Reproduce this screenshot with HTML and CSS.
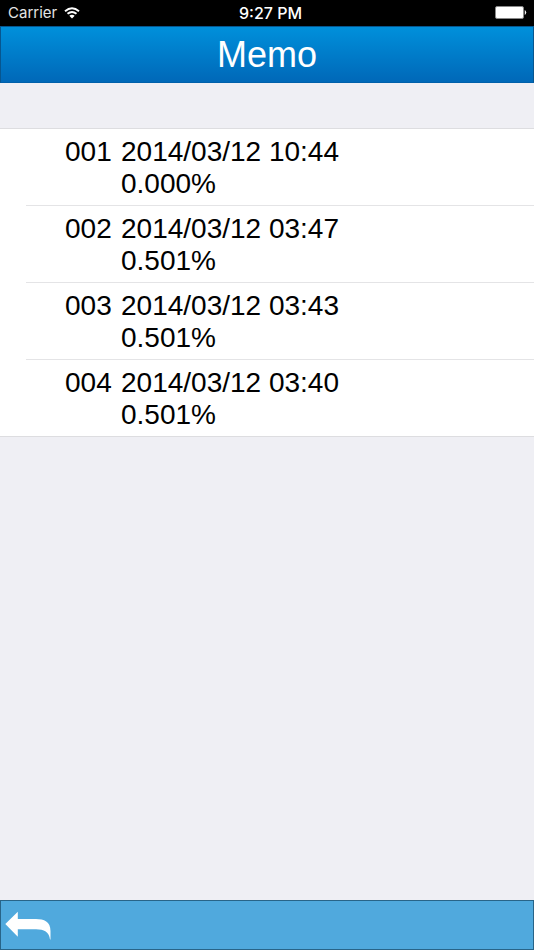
FILE: index.html
```html
<!DOCTYPE html>
<html lang="en">
<head>
<meta charset="utf-8">
<meta name="viewport" content="width=device-width, initial-scale=1">
<title>Memo</title>
<link rel="stylesheet" href="styles.css">
</head>
<body>
<div class="status">
  <div class="carrier">
    <span>Carrier</span>
    <svg class="wifi" viewBox="0 0 16 12" aria-hidden="true">
      <path d="M1 4.2Q8-1.8 15 4.2M3.5 6.8Q8 3 12.5 6.8" fill="none" stroke="#fff" stroke-width="1.9"/>
      <path d="M5.3 8.8Q8 6.6 10.7 8.8L8 11.6Z" fill="#fff"/>
    </svg>
  </div>
  <time class="clock">9:27 PM</time>
  <svg class="battery" viewBox="0 0 32 14" aria-hidden="true">
    <rect x="0.5" y="0.5" width="28" height="12" rx="1.5" fill="#fff" stroke="#888"/>
    <path d="M30 4.5Q32 6.5 30 8.5Z" fill="#fff" stroke="#fff" stroke-width=".5"/>
  </svg>
</div>
<header class="title-bar"><h1>Memo</h1></header>
<main class="content">
  <ol class="memos">
    <li class="memo"><span>001</span><time>2014/03/12 10:44</time><span class="value">0.000%</span></li>
    <li class="memo"><span>002</span><time>2014/03/12 03:47</time><span class="value">0.501%</span></li>
    <li class="memo"><span>003</span><time>2014/03/12 03:43</time><span class="value">0.501%</span></li>
    <li class="memo"><span>004</span><time>2014/03/12 03:40</time><span class="value">0.501%</span></li>
  </ol>
</main>
<footer class="toolbar">
  <button class="back" type="button" aria-label="Back">
    <svg viewBox="0 0 46 29" aria-hidden="true">
      <path d="M0.3 13L12.8 0.7V8H31C39 8 45.5 10.5 45.5 20V28.5H45C44.3 21 39 18.2 31 18.2H12.8V25.7Z" fill="#fff"/>
    </svg>
  </button>
</footer>
</body>
</html>
```
FILE: styles.css
```css
* {
  box-sizing: border-box;
}

body {
  display: flex;
  flex-direction: column;
  min-height: 100vh;
  margin: 0;
  background: #efeff4;
  color: #000;
  font-family: "Liberation Sans", Arial, sans-serif;
}

.status {
  display: grid;
  grid-template-columns: 1fr auto 1fr;
  align-items: center;
  height: 26px;
  padding: 0 7px 0 8px;
  background: #000;
  color: #fff;
  font: 16px/26px Inter, sans-serif;
}

.carrier {
  display: flex;
  align-items: center;
  gap: 7px;
  color: #e4e4e4;
  font-size: 15px;
}

.wifi {
  width: 16px;
  height: 12px;
}

.clock {
  padding-left: 6px;
  font-weight: 500;
}

.battery {
  justify-self: end;
  width: 32px;
  height: 14px;
}

.title-bar {
  height: 57px;
  border: 1px solid #07568f;
  border-bottom-color: #0060aa;
  background: linear-gradient(#0090db, #0068b8);
  color: #fff;
  text-align: center;
}

.title-bar h1 {
  margin: 0;
  font-size: 36px;
  font-weight: 400;
  line-height: 56px;
}

.content {
  flex: 1;
  padding-top: 45px;
}

.memos {
  margin: 0;
  padding: 0 0 0 26px;
  border: solid #dddde0;
  border-width: 1px 0;
  background: #fff;
  list-style: none;
}

.memo {
  display: grid;
  grid-template-columns: 56px 1fr;
  padding: 7px 0 5px 39px;
  font-size: 28px;
  line-height: 32px;
}

.memo + .memo {
  border-top: 1px solid #e4e4e6;
}

.value {
  grid-column: 2;
}

.toolbar {
  height: 50px;
  border: 1px solid #286488;
  background: #50a9dd;
}

.back {
  display: block;
  padding: 10px 4px;
  border: 0;
  background: none;
}

.back svg {
  display: block;
  width: 46px;
  height: 29px;
}
```
